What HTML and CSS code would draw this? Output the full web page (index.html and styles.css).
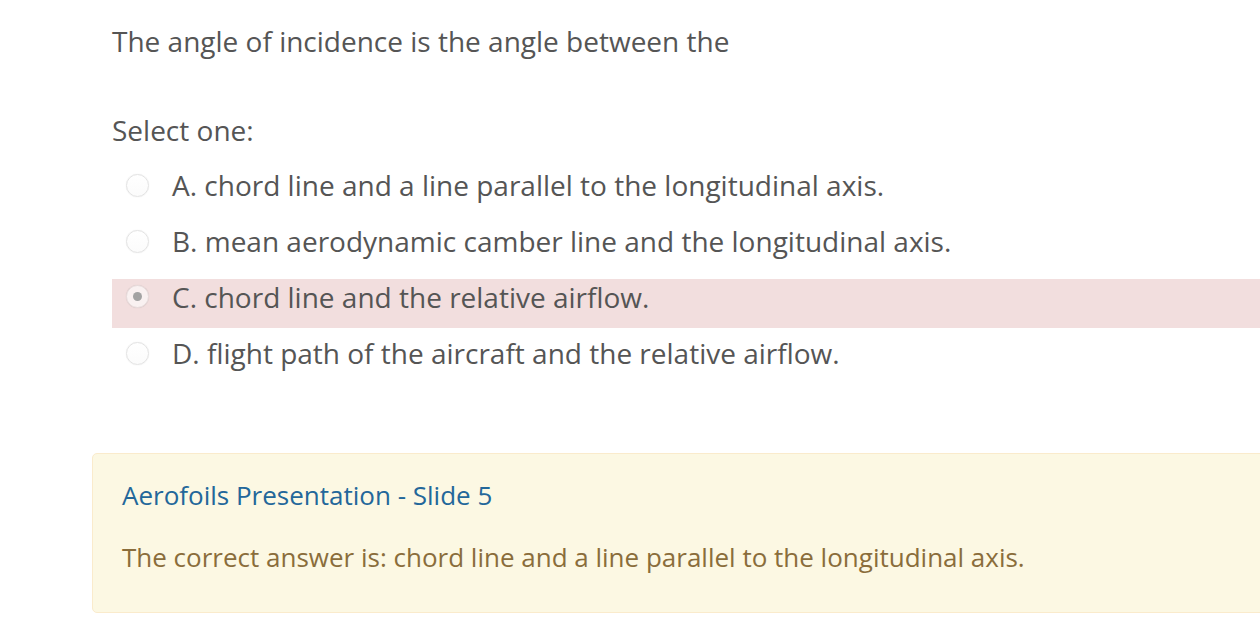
FILE: index.html
```html
<!DOCTYPE html>
<html lang="en">
<head>
<meta charset="utf-8">
<title>Quiz question</title>
<link rel="stylesheet" href="styles.css">
</head>
<body>
<div class="que">
  <div class="qtext">The angle of incidence is the angle between the</div>
  <div class="prompt">Select one:</div>
  <div class="answers">
    <div class="answer"><span class="radio"></span><span class="label">A. chord line and a line parallel to the longitudinal axis.</span></div>
    <div class="answer"><span class="radio"></span><span class="label">B. mean aerodynamic camber line and the longitudinal axis.</span></div>
    <div class="answer incorrect"><span class="radio checked"></span><span class="label">C. chord line and the relative airflow.</span></div>
    <div class="answer"><span class="radio"></span><span class="label">D. flight path of the aircraft and the relative airflow.</span></div>
  </div>
  <div class="outcome">
    <div class="feedback"><a class="ref" href="#">Aerofoils Presentation - Slide 5</a></div>
    <div class="rightanswer">The correct answer is: chord line and a line parallel to the longitudinal axis.</div>
  </div>
</div>
</body>
</html>
```
FILE: styles.css
```css
html, body {
  margin: 0;
  padding: 0;
  overflow: hidden;
  background: #ffffff;
}
body {
  font-family: "Open Sans", "Liberation Sans", sans-serif;
  font-size: 28px;
  line-height: 42px;
  color: #555555;
}
.que {
  padding-top: 20px;
}
.qtext {
  margin-left: 112px;
}
.prompt {
  margin-left: 112px;
  margin-top: 47px;
}
.answers {
  margin-top: 16px;
  margin-left: 112px;
  display: flex;
  flex-direction: column;
  gap: 7px;
}
.answer {
  display: flex;
  align-items: flex-start;
  height: 37px;
  line-height: 37px;
  padding-bottom: 12px;
}
.answer.incorrect {
  background: #f2dede;
}
.radio {
  box-sizing: border-box;
  width: 23px;
  height: 23px;
  margin: 7px 23px 0 14px;
  border-radius: 50%;
  border: 1px solid #e3e3e3;
  background: linear-gradient(#ffffff, #fbfbfb);
  box-shadow: 0 0 1px rgba(0,0,0,0.12);
  display: flex;
  align-items: center;
  justify-content: center;
  flex: none;
}
.radio.checked {
  margin-top: 6px;
  background: #f9f1f1;
  border-color: #e8dcdc;
}
.radio.checked::after {
  content: "";
  width: 9px;
  height: 9px;
  border-radius: 50%;
  background: #a3a3a3;
}
.outcome {
  margin-top: 69px;
  margin-left: 92px;
  margin-right: -20px;
  background: #fcf8e3;
  border: 1px solid #faebcc;
  border-radius: 5px;
  padding: 22px 29px 35px;
  font-size: 26px;
  line-height: 39px;
  color: #8a6d3b;
}
.ref {
  color: #23679a;
  text-decoration: none;
}
.rightanswer {
  margin-top: 23px;
}
```
